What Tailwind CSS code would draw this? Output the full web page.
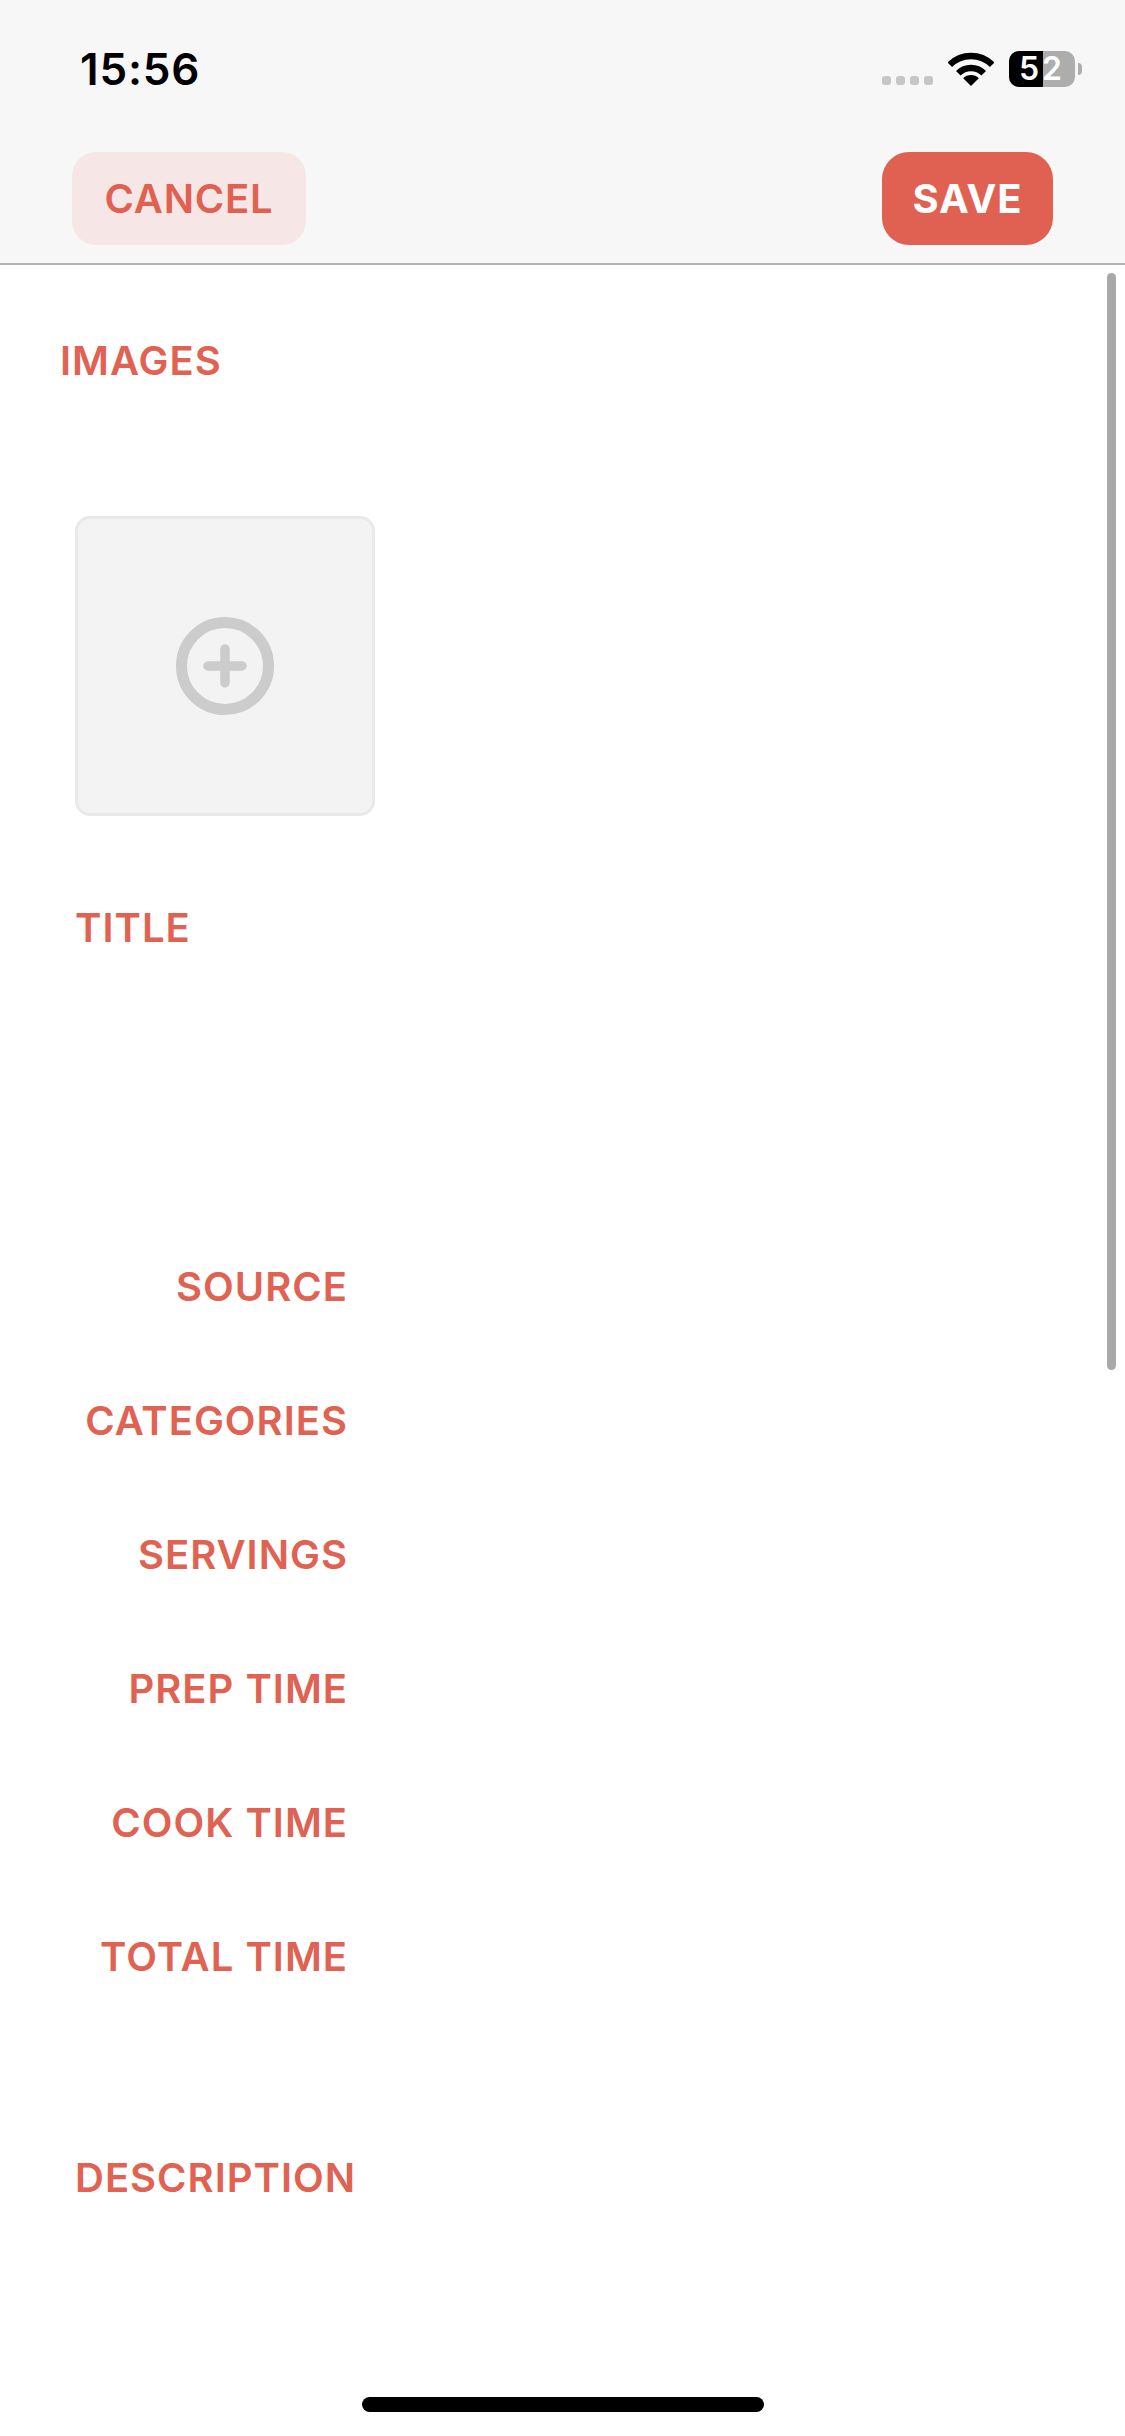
<!doctype html>
<html>
    <head>
        <meta charset="UTF-8" />
        <meta name="viewport" content="width=device-width, initial-scale=1.0" />
        <script src="https://cdn.jsdelivr.net/npm/@tailwindcss/browser@4"></script>
    </head>
    <body class="bg-white">
        <div class="relative w-[1125px] h-[2436px] overflow-hidden bg-white font-['Inter',sans-serif]">
            <header class="h-[265px] bg-[#f7f7f7] border-b-2 border-[#b4b4b4] flex flex-col">
                <div class="h-[152px] pl-[80px] pr-[43px] flex justify-between items-start">
                    <span class="mt-[42px] text-[44px] leading-[54px] font-semibold tracking-[0.8px] text-black">15:56</span>
                    <div class="mt-[51px] flex items-start">
                        <div class="mt-[25px] flex gap-[5px]">
                            <span class="size-[9px] rounded-[3px] bg-[#c6c6c6]"></span>
                            <span class="size-[9px] rounded-[3px] bg-[#c6c6c6]"></span>
                            <span class="size-[9px] rounded-[3px] bg-[#c6c6c6]"></span>
                            <span class="size-[9px] rounded-[3px] bg-[#c6c6c6]"></span>
                        </div>
                        <svg class="ml-[15px] w-[46px] h-[35px]" viewBox="0 0 46 35" fill="none">
                            <path d="M1.8 13.8A30 30 0 0 1 44.2 13.8" stroke="#000" stroke-width="6.5" />
                            <path d="M10.3 22.3A18 18 0 0 1 35.7 22.3" stroke="#000" stroke-width="6.5" />
                            <path d="M23 35L15.2 27.2A11 11 0 0 1 30.8 27.2Z" fill="#000" />
                        </svg>
                        <div class="ml-[15px] relative w-[66px] h-[36px] rounded-[10px] bg-[#adadad]">
                            <div class="absolute inset-y-0 left-0 w-[34px] rounded-l-[10px] bg-black"></div>
                            <div class="absolute inset-0 flex items-center justify-center text-[32px] leading-none font-semibold tracking-[3px] text-white">52</div>
                        </div>
                        <div class="ml-[3px] mt-[12px] w-[4px] h-[12px] rounded-r-full bg-[#adadad]"></div>
                    </div>
                </div>
                <div class="pl-[72px] pr-[72px] flex justify-between">
                    <button class="w-[234px] h-[93px] rounded-[24px] bg-[#f6e7e6] text-[#e06151] text-[40px] font-semibold tracking-[0.8px]">CANCEL</button>
                    <button class="w-[171px] h-[93px] rounded-[27px] bg-[#e06151] text-white text-[40px] font-bold tracking-[0.9px]">SAVE</button>
                </div>
            </header>

            <main class="text-[40px] leading-[46px] font-semibold tracking-[1px] text-[#df6252]">
                <h2 class="mt-[73px] ml-[60px]">IMAGES</h2>
                <button class="mt-[132px] ml-[75px] size-[300px] rounded-[15px] bg-[#f3f3f3] border-[3px] border-[#e9e9e9] flex items-center justify-center">
                    <svg class="size-[98px]" viewBox="0 0 98 98" fill="none" stroke="#cccccc" stroke-linecap="round">
                        <circle cx="49" cy="49" r="43.5" stroke-width="11" />
                        <path d="M32 49H66M49 32V66" stroke-width="9.5" />
                    </svg>
                </button>
                <h2 class="mt-[89px] ml-[75px]">TITLE</h2>
                <div class="mt-[313px] w-[348px] flex flex-col gap-[88px] text-right">
                    <label>SOURCE</label>
                    <label>CATEGORIES</label>
                    <label>SERVINGS</label>
                    <label>PREP TIME</label>
                    <label>COOK TIME</label>
                    <label>TOTAL TIME</label>
                </div>
                <h2 class="mt-[175px] ml-[75px]">DESCRIPTION</h2>
            </main>

            <div class="absolute left-[1107px] top-[273px] w-[9px] h-[1097px] rounded-full bg-[#a8a8a8]"></div>
            <div class="absolute left-[362px] top-[2397px] w-[402px] h-[15px] rounded-full bg-black"></div>
        </div>
    </body>
</html>
